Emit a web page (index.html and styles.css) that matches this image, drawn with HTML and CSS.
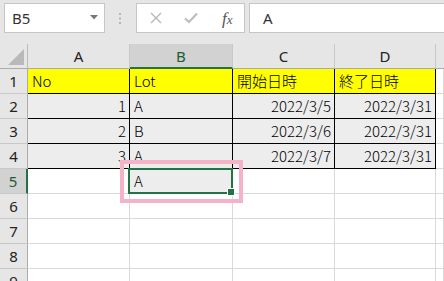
FILE: index.html
```html
<!DOCTYPE html>
<html lang="ja">
<head>
<meta charset="utf-8">
<link rel="stylesheet" href="styles.css">
</head>
<body>
<div class="formula-bar">
  <div class="namebox">
    <span class="namebox-text">B5</span>
    <svg class="caret" width="8" height="5" viewBox="0 0 8 5"><path d="M0 0H8L4 4.5Z" fill="#777"/></svg>
  </div>
  <div class="grip">
    <svg width="3" height="11" viewBox="0 0 3 11"><rect x="0" y="0" width="2" height="2" fill="#b5b5b5"/><rect x="0" y="4.5" width="2" height="2" fill="#b5b5b5"/><rect x="0" y="9" width="2" height="2" fill="#b5b5b5"/></svg>
  </div>
  <div class="fx-buttons">
    <svg class="btn-icon" width="12" height="12" viewBox="0 0 12 12"><path d="M1 1L11 11M11 1L1 11" stroke="#b8b8b8" stroke-width="1.4" fill="none"/></svg>
    <svg class="btn-icon" width="14" height="12" viewBox="0 0 14 12"><path d="M1 6.5L5 10L13 1.5" stroke="#bdbdbd" stroke-width="2.2" fill="none"/></svg>
    <span class="fx"><i>f</i><i class="x">x</i></span>
  </div>
  <div class="formula-input">A</div>
</div>

<div class="sheet">
  <div class="corner"><span class="corner-tri"></span></div>
  <div class="colhead">A</div>
  <div class="colhead sel">B</div>
  <div class="colhead">C</div>
  <div class="colhead">D</div>
  <div class="colhead last"></div>

  <div class="rowhead">1</div>
  <div class="cell t y">No</div>
  <div class="cell t y">Lot</div>
  <div class="cell t y">開始日時</div>
  <div class="cell t y">終了日時</div>
  <div class="cell"></div>

  <div class="rowhead">2</div>
  <div class="cell t g num">1</div>
  <div class="cell t g">A</div>
  <div class="cell t g num">2022/3/5</div>
  <div class="cell t g num">2022/3/31</div>
  <div class="cell"></div>

  <div class="rowhead">3</div>
  <div class="cell t g num">2</div>
  <div class="cell t g">B</div>
  <div class="cell t g num">2022/3/6</div>
  <div class="cell t g num">2022/3/31</div>
  <div class="cell"></div>

  <div class="rowhead">4</div>
  <div class="cell t g num">3</div>
  <div class="cell t g">A</div>
  <div class="cell t g num">2022/3/7</div>
  <div class="cell t g num">2022/3/31</div>
  <div class="cell"></div>

  <div class="rowhead sel">5</div>
  <div class="cell"></div>
  <div class="cell active">A</div>
  <div class="cell"></div>
  <div class="cell"></div>
  <div class="cell"></div>

  <div class="rowhead">6</div>
  <div class="cell"></div><div class="cell"></div><div class="cell"></div><div class="cell"></div><div class="cell"></div>
  <div class="rowhead">7</div>
  <div class="cell"></div><div class="cell"></div><div class="cell"></div><div class="cell"></div><div class="cell"></div>
  <div class="rowhead">8</div>
  <div class="cell"></div><div class="cell"></div><div class="cell"></div><div class="cell"></div><div class="cell"></div>
  <div class="rowhead">9</div>
  <div class="cell"></div><div class="cell"></div><div class="cell"></div><div class="cell"></div><div class="cell"></div>

  <div class="selection"><span class="handle"></span></div>
  <div class="highlight"></div>
</div>
</body>
</html>
```

FILE: styles.css
```css
html, body {
  margin: 0;
  padding: 0;
}
body {
  width: 444px;
  height: 281px;
  overflow: hidden;
  background: #ffffff;
  font-family: "Noto Sans CJK JP", "Noto Sans", sans-serif;
}

.formula-bar {
  display: flex;
  align-items: flex-start;
  height: 44px;
  padding-top: 3px;
  box-sizing: border-box;
  background: #e6e6e6;
}

.namebox {
  margin-left: 4px;
  width: 101px;
  height: 30px;
  box-sizing: border-box;
  border: 1px solid #c6c6c6;
  background: #ffffff;
  display: flex;
  align-items: center;
  justify-content: space-between;
  padding: 0 6px 0 7px;
}
.namebox-text {
  font-family: "Noto Sans", "Open Sans", sans-serif;
  font-size: 15px;
  color: #333;
  line-height: 1;
}
.caret {
  display: block;
  margin-top: -2px;
}

.grip {
  width: 31px;
  height: 30px;
  display: flex;
  align-items: center;
  justify-content: center;
}
.grip svg { display: block; }

.fx-buttons {
  width: 109px;
  height: 30px;
  box-sizing: border-box;
  border: 1px solid #c6c6c6;
  background: #ffffff;
  display: flex;
  align-items: center;
  padding-left: 13px;
}
.btn-icon {
  display: block;
}
.btn-icon + .btn-icon {
  margin-left: 22px;
}
.fx {
  margin-left: 24px;
  font-family: "Liberation Serif", "DejaVu Serif", serif;
  font-size: 17px;
  color: #555;
  line-height: 1;
}
.fx .x {
  font-size: 13px;
  margin-left: 0;
}

.formula-input {
  margin-left: 4px;
  flex: 1;
  height: 30px;
  box-sizing: border-box;
  border: 1px solid #c6c6c6;
  border-right: none;
  background: #ffffff;
  font-family: "Noto Sans", "Open Sans", sans-serif;
  font-size: 15px;
  color: #333;
  line-height: 28px;
  padding-left: 13px;
}

.sheet {
  position: relative;
  display: grid;
  grid-template-columns: 28px 102px 103px 102px 101px 8px;
  grid-template-rows: repeat(10, 25px);
}

.corner {
  background: #e6e6e6;
  border-right: 1px solid #bcbcbc;
  border-bottom: 1px solid #ababab;
  box-sizing: border-box;
  position: relative;
}
.corner-tri {
  position: absolute;
  right: 3px;
  bottom: 3px;
  width: 0;
  height: 0;
  border-left: 16px solid transparent;
  border-bottom: 16px solid #b9b9b9;
}

.colhead {
  background: #e6e6e6;
  border-right: 1px solid #c8c8c8;
  border-bottom: 1px solid #ababab;
  box-sizing: border-box;
  text-align: center;
  font-family: "Noto Sans", "Open Sans", sans-serif;
  font-size: 15px;
  line-height: 24px;
  color: #222;
}
.colhead.sel {
  background: #d2d2d2;
  border-bottom: 2px solid #217346;
  color: #1e5a38;
}
.colhead.last {
  border-right: none;
}

.rowhead {
  background: #e6e6e6;
  border-right: 1px solid #ababab;
  border-bottom: 1px solid #c8c8c8;
  box-sizing: border-box;
  text-align: center;
  font-family: "Noto Sans", "Open Sans", sans-serif;
  font-size: 15px;
  line-height: 24px;
  color: #222;
}
.rowhead.sel {
  background: #d2d2d2;
  border-right: 2px solid #217346;
  color: #1e5a38;
}

.cell {
  border-right: 1px solid #d9d9d9;
  border-bottom: 1px solid #d9d9d9;
  box-sizing: border-box;
  font-size: 15px;
  font-weight: 300;
  line-height: 24px;
  color: #000;
  padding: 0 3px 0 4px;
  white-space: nowrap;
  overflow: hidden;
}
.cell.t {
  border-right-color: #000;
  border-bottom-color: #000;
}
.cell.y {
  background: #ffff00;
}
.cell.g {
  background: #ededed;
}
.cell.num {
  text-align: right;
}
.cell.active {
  background: #ededed;
}

.selection {
  position: absolute;
  left: 128px;
  top: 124px;
  width: 105px;
  height: 26px;
  box-sizing: border-box;
  border: 2px solid #217346;
}
.handle {
  position: absolute;
  right: -4px;
  bottom: -4px;
  width: 6px;
  height: 6px;
  background: #217346;
  border: 1px solid #ffffff;
}

.highlight {
  position: absolute;
  left: 120px;
  top: 116px;
  width: 123px;
  height: 43px;
  box-sizing: border-box;
  border: 4px solid #f5b3c8;
}
```
